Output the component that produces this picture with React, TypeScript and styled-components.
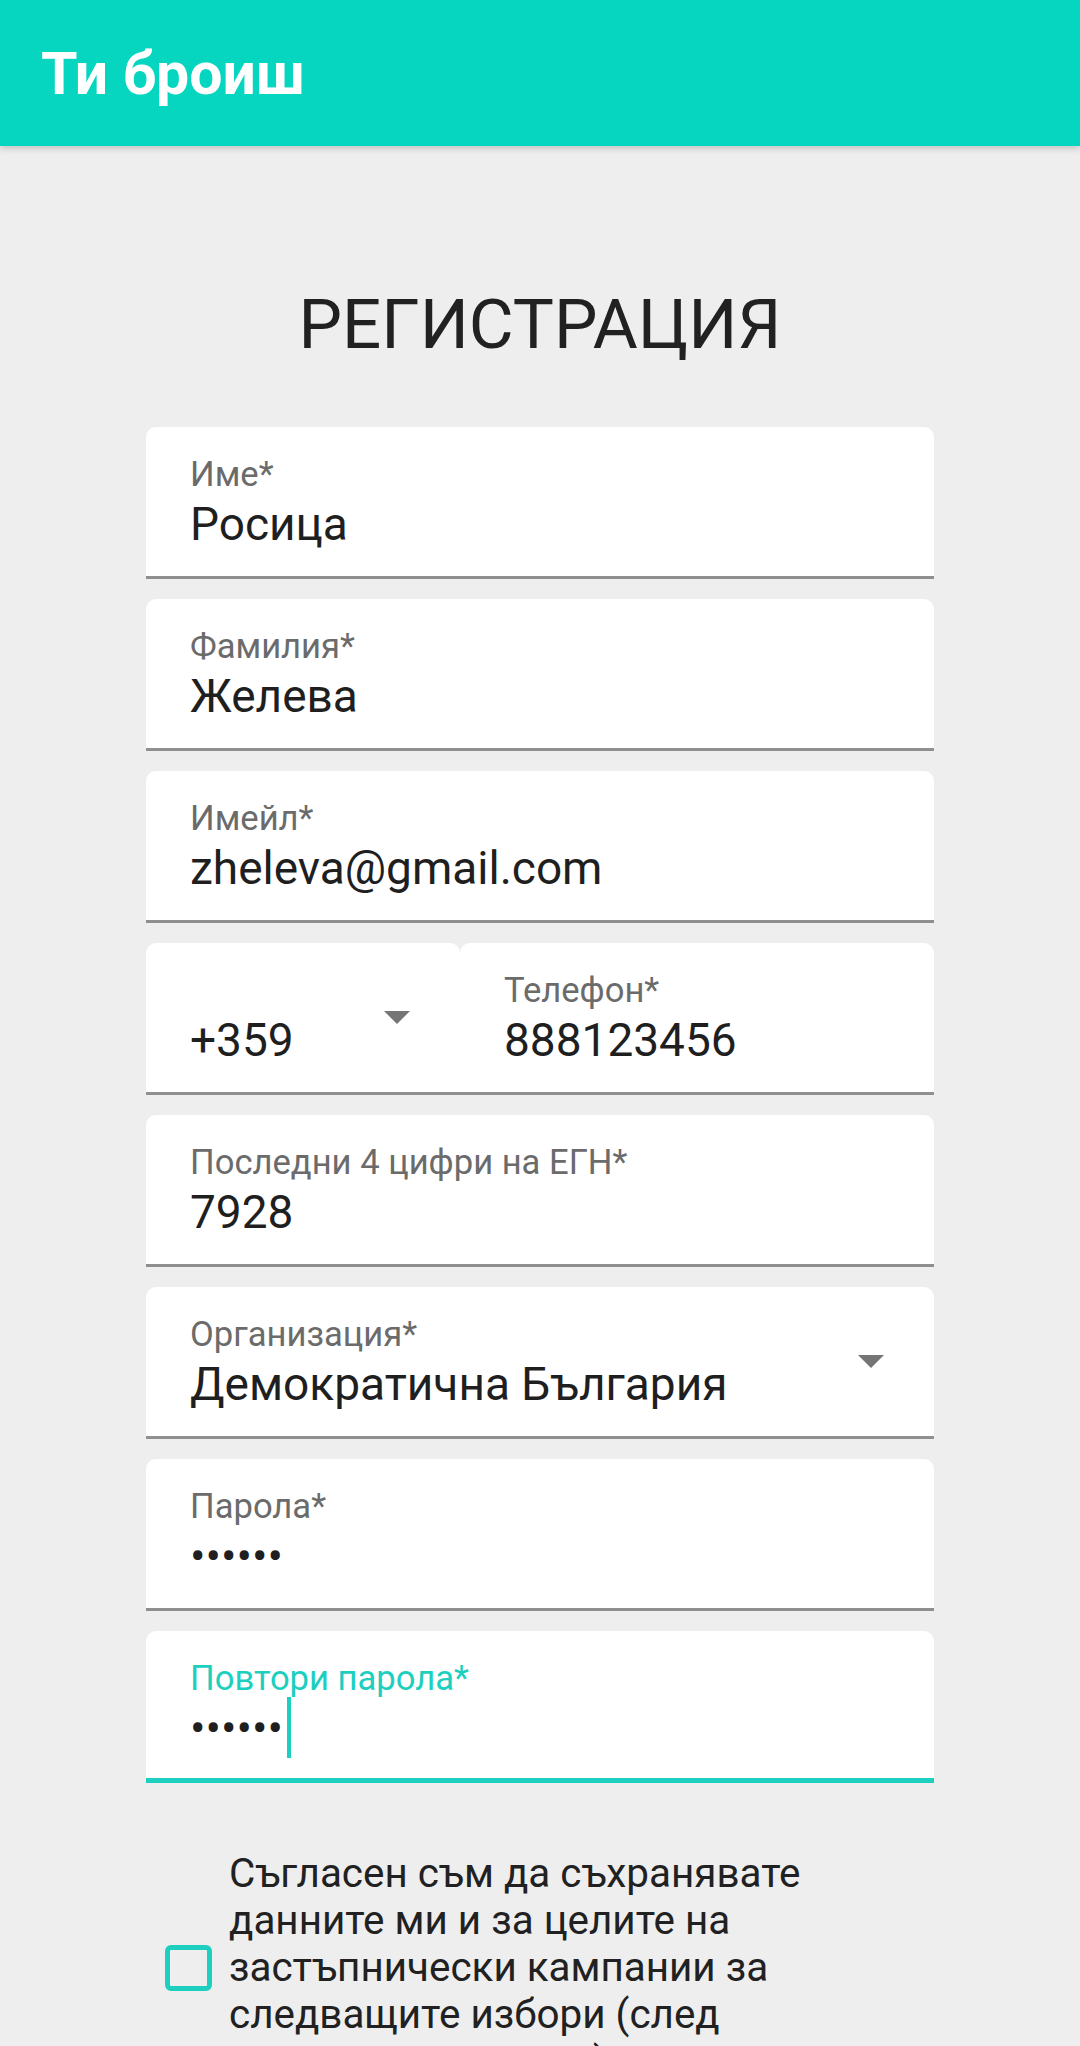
import React from "react";
import styled, { createGlobalStyle, css } from "styled-components";

const TEAL = "#06d6c0";
const ACCENT = "#1ccfbe";

const GlobalStyle = createGlobalStyle`
  html, body {
    margin: 0;
    padding: 0;
    background: #eeeeee;
    font-family: Roboto, "Noto Sans", "Liberation Sans", sans-serif;
  }
  * { box-sizing: border-box; }
`;

const Screen = styled.div`
  width: 1080px;
  height: 2046px;
  overflow: hidden;
  background: #eeeeee;
  display: flex;
  flex-direction: column;
`;

const AppBar = styled.header`
  height: 146px;
  flex-shrink: 0;
  background: ${TEAL};
  display: flex;
  align-items: center;
  padding-left: 41px;
  box-shadow: 0 3px 6px rgba(0, 0, 0, 0.16);
  position: relative;
  z-index: 1;
`;

const AppTitle = styled.h1`
  margin: 0;
  color: #ffffff;
  font-size: 59px;
  font-weight: 700;
  line-height: 1;
`;

const Content = styled.main`
  display: flex;
  flex-direction: column;
  align-items: center;
`;

const PageTitle = styled.h2`
  margin: 138px 0 0;
  font-size: 69px;
  line-height: 81px;
  font-weight: 400;
  color: #212121;
`;

const Form = styled.div`
  margin-top: 62px;
  width: 788px;
  display: flex;
  flex-direction: column;
  gap: 20px;
`;

const Row = styled.div`
  display: flex;
`;

const FieldBox = styled.div<{ $focused?: boolean; $width?: number; $grow?: boolean }>`
  height: 152px;
  flex: none;
  ${({ $width }) => $width && css`width: ${$width}px;`}
  ${({ $grow }) => $grow && css`flex: 1 1 auto;`}
  background: #ffffff;
  border-radius: 10px 10px 0 0;
  border-bottom: ${({ $focused }) => ($focused ? `5px solid ${ACCENT}` : "3px solid #8f8f8f")};
  padding: 0 43px 0 44px;
  display: flex;
  align-items: stretch;
`;

const FieldColumn = styled.div`
  flex: 1;
  padding-top: 27px;
  display: flex;
  flex-direction: column;
`;

const Label = styled.div<{ $focused?: boolean }>`
  font-size: 34.6px;
  line-height: 40px;
  height: 40px;
  color: ${({ $focused }) => ($focused ? ACCENT : "#6b6b6b")};
`;

const Value = styled.div`
  margin-top: 3px;
  font-size: 46px;
  line-height: 54px;
  color: #1f1f1f;
  display: flex;
  align-items: center;
  white-space: nowrap;
`;

const Caret = styled.span`
  display: inline-block;
  width: 4px;
  height: 61px;
  margin: -4px 0 -3px 4px;
  background: ${ACCENT};
`;

const ArrowWrap = styled.div`
  align-self: center;
  margin-right: 7px;
  display: flex;
`;

const DropArrow = () => (
  <ArrowWrap>
    <svg width="26" height="13" viewBox="0 0 26 13">
      <path d="M0 0 L26 0 L13 13 Z" fill="#757575" />
    </svg>
  </ArrowWrap>
);

const ConsentRow = styled.label`
  margin-top: 67px;
  width: 788px;
  display: flex;
  align-items: center;
  padding-left: 19px;
  gap: 17px;
`;

const CheckBox = styled.span`
  width: 47px;
  height: 46px;
  flex-shrink: 0;
  border: 5px solid ${ACCENT};
  border-radius: 6px;
`;

const ConsentText = styled.p`
  margin: 0;
  width: 703px;
  font-size: 40.4px;
  line-height: 47px;
  color: #212121;
`;

type FieldProps = {
  label: string;
  value: React.ReactNode;
  focused?: boolean;
  dropdown?: boolean;
};

const Field = ({ label, value, focused, dropdown }: FieldProps) => (
  <FieldBox $focused={focused}>
    <FieldColumn>
      <Label $focused={focused}>{label}</Label>
      <Value>{value}</Value>
    </FieldColumn>
    {dropdown && <DropArrow />}
  </FieldBox>
);

export default function App() {
  return (
    <>
      <GlobalStyle />
      <Screen>
        <AppBar>
          <AppTitle>Ти броиш</AppTitle>
        </AppBar>
        <Content>
          <PageTitle>РЕГИСТРАЦИЯ</PageTitle>
          <Form>
            <Field label="Име*" value="Росица" />
            <Field label="Фамилия*" value="Желева" />
            <Field label="Имейл*" value="zheleva@gmail.com" />
            <Row>
              <FieldBox $width={314}>
                <FieldColumn>
                  <Label />
                  <Value>+359</Value>
                </FieldColumn>
                <DropArrow />
              </FieldBox>
              <FieldBox $grow>
                <FieldColumn>
                  <Label>Телефон*</Label>
                  <Value>888123456</Value>
                </FieldColumn>
              </FieldBox>
            </Row>
            <Field label="Последни 4 цифри на ЕГН*" value="7928" />
            <Field label="Организация*" value="Демократична България" dropdown />
            <Field label="Парола*" value="••••••" />
            <Field
              label="Повтори парола*"
              focused
              value={
                <>
                  ••••••
                  <Caret />
                </>
              }
            />
          </Form>
          <ConsentRow>
            <CheckBox />
            <ConsentText>
              Съгласен съм да съхранявате данните ми и за целите на застъпнически кампании за
              следващите избори (след приключването им)
            </ConsentText>
          </ConsentRow>
        </Content>
      </Screen>
    </>
  );
}
